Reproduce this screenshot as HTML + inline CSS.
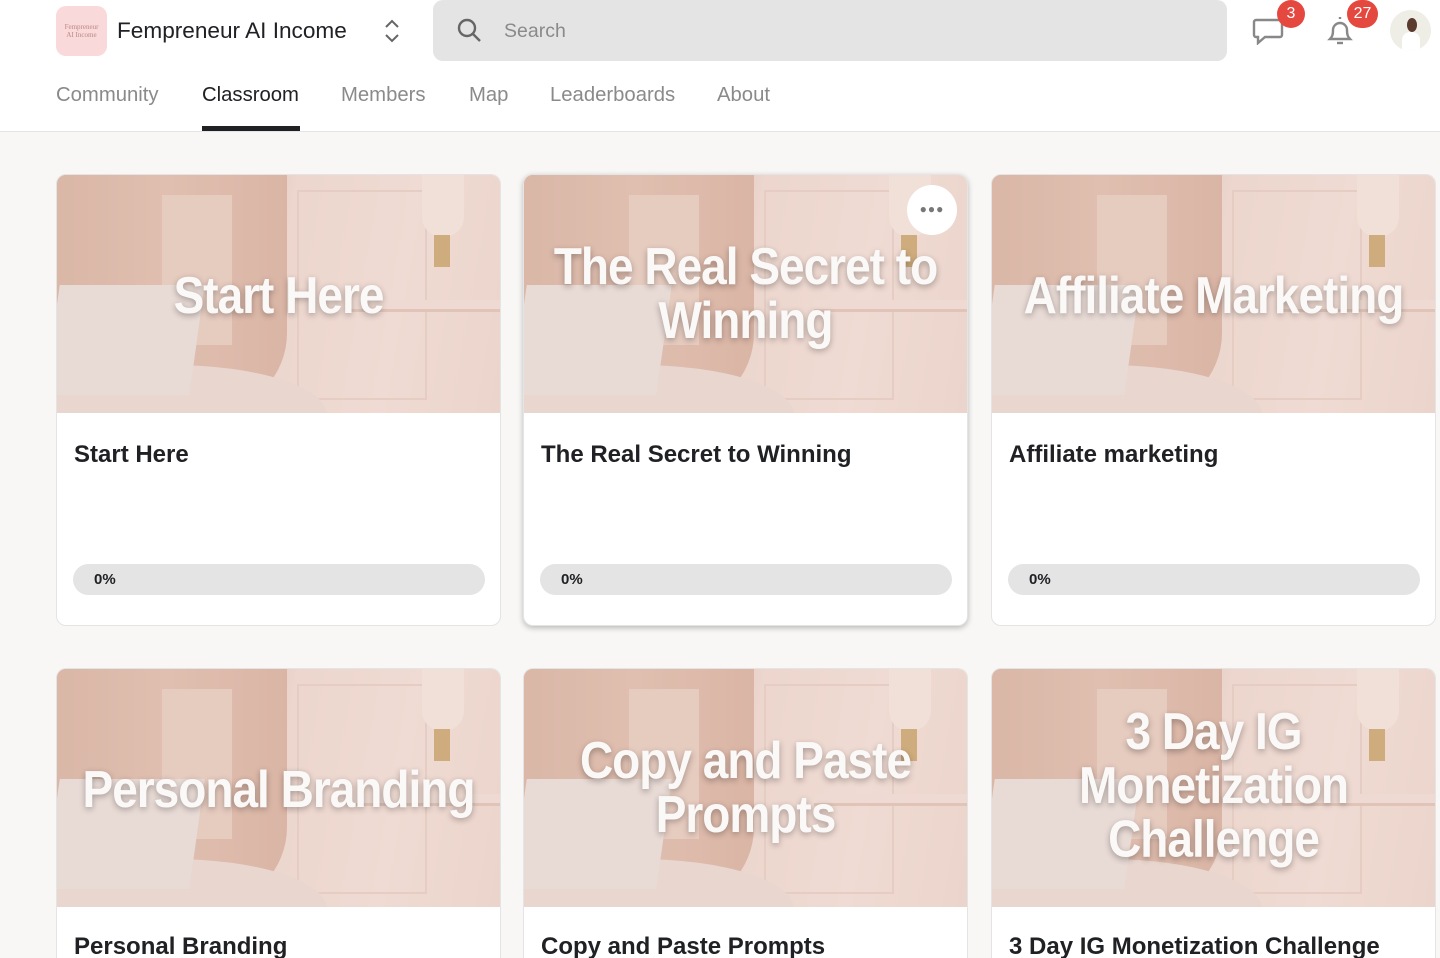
<!DOCTYPE html>
<html style="width:1440px;height:958px;overflow:hidden"><head><meta charset="utf-8">
<style>
*{box-sizing:border-box;margin:0;padding:0}
body{width:1440px;height:958px;overflow:hidden;background:#f8f7f5;font-family:"Liberation Sans",Arial,sans-serif;color:#202124;position:relative}
.hdr{position:absolute;left:0;top:0;width:1440px;height:132px;background:#fff;border-bottom:1px solid #e4e4e4}
.logo{position:absolute;left:56px;top:6px;width:51px;height:50px;border-radius:10px;background:#f9d9d9;color:#b88;font-family:"Liberation Serif",serif;font-size:7px;text-align:center;line-height:8px;padding-top:17px}
.name{position:absolute;left:117px;top:18px;font-size:22.6px;color:#202124}
.chev{position:absolute;left:382px;top:17px}
.search{position:absolute;left:433px;top:0;width:794px;height:61px;border-radius:10px;background:#e4e4e4}
.search span{position:absolute;left:71px;top:20px;font-size:19.5px;color:#8a8a8a}
.search svg{position:absolute;left:24px;top:18px}
.nav{position:absolute;top:84px;font-size:20.3px;color:#8a8a8a}
.ul{position:absolute;left:202px;top:126px;width:98px;height:5px;background:#202124}
.badge{position:absolute;background:#e5483f;color:#fff;border-radius:14px;height:28px;font-size:16px;text-align:center;line-height:28px}
.avatar{position:absolute;left:1390px;top:10px;width:41px;height:41px;border-radius:50%;background:#eeede6;overflow:hidden}
.card{position:absolute;width:445px;height:452px;background:#fff;border:1px solid #e4e4e4;border-radius:10px;overflow:hidden}
.card.r2{height:290px;border-bottom:none;border-radius:10px 10px 0 0}
.card.sh{box-shadow:0 2px 6px rgba(0,0,0,.25)}
.img{position:absolute;left:0;top:0;width:100%;height:238px;background:linear-gradient(100deg,#dcbcae 0%,#dfc0b2 35%,#ecd6ce 50%,#efdbd3 75%,#ebd4cb 100%);overflow:hidden}
.img .jk{position:absolute;left:-10px;top:0;width:240px;height:238px;background:linear-gradient(90deg,#d9b6a6,#e0bfb0 50%,#dab5a5);border-radius:0 0 80px 0}
.img .top{position:absolute;left:105px;top:20px;width:70px;height:150px;background:#e6cbbf}
.img .lap{position:absolute;left:-5px;top:110px;width:145px;height:110px;background:#e8dad5;transform:skewX(-8deg)}
.img .tbl{position:absolute;left:-40px;top:190px;width:310px;height:100px;border-radius:50%;background:#e8d6cf}
.img .wall{position:absolute;left:240px;top:15px;width:130px;height:210px;border:2px solid #e6cdc3}
.img .desk{position:absolute;left:290px;top:125px;width:170px;height:12px;background:#eedad2;border-bottom:3px solid #e0c4b8}
.img .lamp{position:absolute;left:365px;top:0;width:42px;height:62px;background:#f0e0d8;border-radius:0 0 20px 20px}
.img .base{position:absolute;left:377px;top:60px;width:16px;height:32px;background:#cfac7d}
.img .t{position:absolute;left:0;right:0;text-align:center;color:#fbf9f8;font-family:"Liberation Sans Narrow","Liberation Sans",sans-serif;font-weight:bold;font-size:46px;line-height:48px;letter-spacing:-1px;text-shadow:0 2px 6px rgba(0,0,0,.3);transform:scaleY(1.12)}
.ct{position:absolute;left:17px;top:266px;font-size:24px;font-weight:bold;color:#202124}
.bar{position:absolute;left:16px;top:389px;width:412px;height:31px;border-radius:16px;background:#e4e4e4;font-size:15px;font-weight:bold;padding:7px 0 0 21px;color:#202124}
.dots{position:absolute;right:10px;top:10px;width:50px;height:50px;border-radius:50%;background:#fff;text-align:center;line-height:48px;color:#777;font-size:12px;letter-spacing:1px}
</style></head><body>
<div class="hdr">
<div class="logo">Fempreneur<br>AI Income</div>
<div class="name">Fempreneur AI Income</div>
<svg class="chev" width="20" height="28" viewBox="0 0 20 28"><path d="M4 10l6-6 6 6M4 18l6 6 6-6" fill="none" stroke="#666" stroke-width="2"/></svg>
<div class="search"><svg width="26" height="26" viewBox="0 0 26 26"><circle cx="10" cy="10" r="8" fill="none" stroke="#666" stroke-width="2.4"/><path d="M16 16l7 7" stroke="#666" stroke-width="2.4"/></svg><span>Search</span></div>
<svg style="position:absolute;left:1252px;top:17px" width="32" height="28" viewBox="0 0 32 28"><path d="M4 3h24a2 2 0 0 1 2 2v13a2 2 0 0 1-2 2H13l-7 6v-6H4a2 2 0 0 1-2-2V5a2 2 0 0 1 2-2z" fill="none" stroke="#888" stroke-width="2.4"/></svg>
<div class="badge" style="left:1277px;top:0;width:28px">3</div>
<svg style="position:absolute;left:1325px;top:14px" width="30" height="34" viewBox="0 0 30 34"><path d="M5 25c2-2 3-4 3-9a7 7 0 0 1 14 0c0 5 1 7 3 9z" fill="none" stroke="#888" stroke-width="2.4"/><path d="M12 29h6" stroke="#888" stroke-width="2.4"/><path d="M15 5v-2" stroke="#888" stroke-width="2.4"/></svg>
<div class="badge" style="left:1347px;top:0;width:31px">27</div>
<div class="avatar"><div style="position:absolute;left:17px;top:8px;width:10px;height:14px;border-radius:50%;background:#5a3b2e"></div><div style="position:absolute;left:12px;top:22px;width:18px;height:22px;border-radius:8px 8px 0 0;background:#fff"></div></div>
<div class="nav" style="left:56px">Community</div>
<div class="nav" style="left:202px;color:#202124">Classroom</div>
<div class="nav" style="left:341px">Members</div>
<div class="nav" style="left:469px">Map</div>
<div class="nav" style="left:550px">Leaderboards</div>
<div class="nav" style="left:717px">About</div>
<div class="ul"></div>
</div>

<div class="card" style="left:56px;top:174px"><div class="img"><div class="jk"></div><div class="top"></div><div class="wall"></div><div class="desk"></div><div class="lamp"></div><div class="base"></div><div class="tbl"></div><div class="lap"></div><div class="t" style="top:96px">Start Here</div></div><div class="ct">Start Here</div><div class="bar">0%</div></div>
<div class="card sh" style="left:523px;top:174px"><div class="img"><div class="jk"></div><div class="top"></div><div class="wall"></div><div class="desk"></div><div class="lamp"></div><div class="base"></div><div class="tbl"></div><div class="lap"></div><div class="t" style="top:70px">The Real Secret to<br>Winning</div><div class="dots">●●●</div></div><div class="ct">The Real Secret to Winning</div><div class="bar">0%</div></div>
<div class="card" style="left:991px;top:174px"><div class="img"><div class="jk"></div><div class="top"></div><div class="wall"></div><div class="desk"></div><div class="lamp"></div><div class="base"></div><div class="tbl"></div><div class="lap"></div><div class="t" style="top:96px">Affiliate Marketing</div></div><div class="ct">Affiliate marketing</div><div class="bar">0%</div></div>

<div class="card r2" style="left:56px;top:668px"><div class="img"><div class="jk"></div><div class="top"></div><div class="wall"></div><div class="desk"></div><div class="lamp"></div><div class="base"></div><div class="tbl"></div><div class="lap"></div><div class="t" style="top:96px">Personal Branding</div></div><div class="ct" style="top:264px">Personal Branding</div></div>
<div class="card r2" style="left:523px;top:668px"><div class="img"><div class="jk"></div><div class="top"></div><div class="wall"></div><div class="desk"></div><div class="lamp"></div><div class="base"></div><div class="tbl"></div><div class="lap"></div><div class="t" style="top:70px">Copy and Paste<br>Prompts</div></div><div class="ct" style="top:264px">Copy and Paste Prompts</div></div>
<div class="card r2" style="left:991px;top:668px"><div class="img"><div class="jk"></div><div class="top"></div><div class="wall"></div><div class="desk"></div><div class="lamp"></div><div class="base"></div><div class="tbl"></div><div class="lap"></div><div class="t" style="top:44px">3 Day IG<br>Monetization<br>Challenge</div></div><div class="ct" style="top:264px">3 Day IG Monetization Challenge</div></div>
</body></html>
